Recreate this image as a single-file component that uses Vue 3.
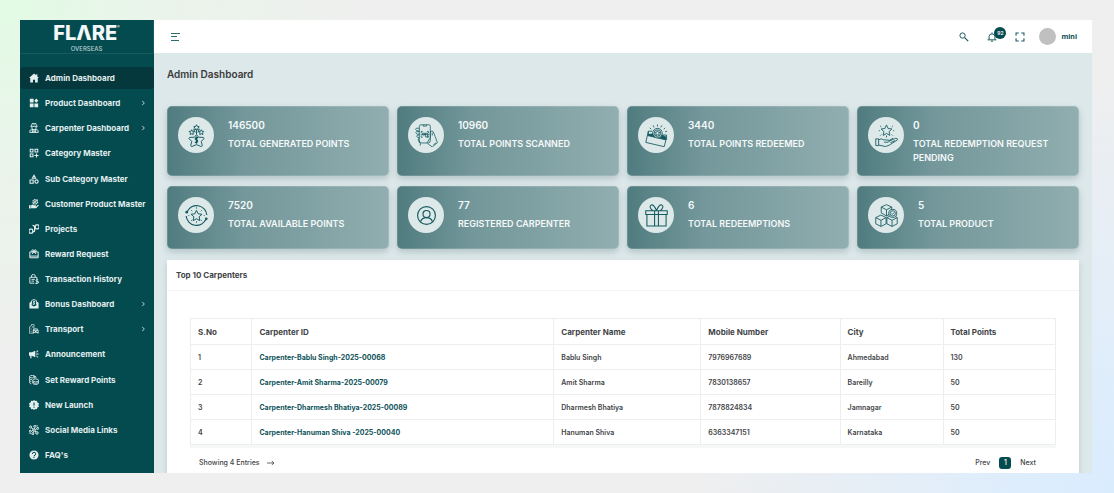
<script setup>
const menu = [
  { label: 'Admin Dashboard', icon: 'home', active: true },
  { label: 'Product Dashboard', icon: 'widgets', more: true },
  { label: 'Carpenter Dashboard', icon: 'worker', more: true },
  { label: 'Category Master', icon: 'category' },
  { label: 'Sub Category Master', icon: 'shapes' },
  { label: 'Customer Product Master', icon: 'handgear' },
  { label: 'Projects', icon: 'projects' },
  { label: 'Reward Request', icon: 'reward' },
  { label: 'Transaction History', icon: 'history' },
  { label: 'Bonus Dashboard', icon: 'bonus', more: true },
  { label: 'Transport', icon: 'transport', more: true },
  { label: 'Announcement', icon: 'megaphone' },
  { label: 'Set Reward Points', icon: 'coins' },
  { label: 'New Launch', icon: 'launch' },
  { label: 'Social Media Links', icon: 'social' },
  { label: "FAQ's", icon: 'faq' }
]

const stats = [
  { value: '146500', label: 'TOTAL GENERATED POINTS', icon: 'generated' },
  { value: '10960', label: 'TOTAL POINTS SCANNED', icon: 'scan' },
  { value: '3440', label: 'TOTAL POINTS REDEEMED', icon: 'redeemed' },
  { value: '0', label: 'TOTAL REDEMPTION REQUEST PENDING', icon: 'pending', tight: true },
  { value: '7520', label: 'TOTAL AVAILABLE POINTS', icon: 'available' },
  { value: '77', label: 'REGISTERED CARPENTER', icon: 'user' },
  { value: '6', label: 'TOTAL REDEEMPTIONS', icon: 'gift' },
  { value: '5', label: 'TOTAL PRODUCT', icon: 'boxes' }
]

const columns = ['S.No', 'Carpenter ID', 'Carpenter Name', 'Mobile Number', 'City', 'Total Points']

const carpenters = [
  { id: 'Carpenter-Bablu Singh-2025-00068', name: 'Bablu Singh', mobile: '7976967689', city: 'Ahmedabad', points: 130 },
  { id: 'Carpenter-Amit Sharma-2025-00079', name: 'Amit Sharma', mobile: '7830138657', city: 'Bareilly', points: 50 },
  { id: 'Carpenter-Dharmesh Bhatiya-2025-00089', name: 'Dharmesh Bhatiya', mobile: '7878824834', city: 'Jamnagar', points: 50 },
  { id: 'Carpenter-Hanuman Shiva -2025-00040', name: 'Hanuman Shiva', mobile: '6363347151', city: 'Karnataka', points: 50 }
]
</script>

<template>
  <div class="page">
    <svg class="sprite" aria-hidden="true">
      <!-- sidebar icons -->
      <symbol id="home" viewBox="0 0 24 24"><path fill="currentColor" d="M12 1 0 12h3v10.500h6.500V16h5v6.500H21V12h3l-4-3.700V3h-3v2.600z" /></symbol>
      <symbol id="widgets" viewBox="0 0 24 24"><path fill="currentColor" d="M2 2h9v9H2zM2 13h9v9H2zM13 13h9v9h-9zM17.500 1l5 5.500-5 5-5-5z" /></symbol>
      <symbol id="worker" viewBox="0 0 24 24"><g fill="none" stroke="currentColor" stroke-width="2.200"><path d="M6 8V6a6 6 0 0 1 12 0v2M3 8h18M7 9v3a5 5 0 0 0 10 0V9M2 23v-4q0-3 5-3h10q5 0 5 3v4zM8 16v7M16 16v7M8 20h8M12 0v5" /></g></symbol>
      <symbol id="category" viewBox="0 0 24 24"><path fill="none" stroke="currentColor" stroke-width="2.600" d="M3 3h6.500v6.500H3zM14.500 3H21v6.500h-6.500zM3 14.500h6.500V21H3zM18 13v10M13 18h10" /></symbol>
      <symbol id="shapes" viewBox="0 0 24 24"><g fill="none" stroke="currentColor" stroke-width="2.600"><path d="m12 3 4 7H8zM2.500 14.500H10V22H2.500z" /><circle cx="18" cy="18" r="4" /></g></symbol>
      <symbol id="handgear" viewBox="0 0 24 24"><path fill="currentColor" d="M0 15h4v8H0zM5 15q4-3 7 0h4q2 1 0 3h-5 6l5-4q2 0 1 2l-6 6H5z" /><g fill="none" stroke="currentColor" stroke-width="2"><circle cx="15" cy="7" r="5.500" stroke-dasharray="2.400 1" stroke-width="3" /><circle cx="15" cy="7" r="2" /><path d="m8 13 12-12" /></g></symbol>
      <symbol id="projects" viewBox="0 0 24 24"><g fill="none" stroke="currentColor" stroke-width="3"><rect x="0" y="12.500" width="9" height="9.500" rx="3" /><rect x="15" y="2" width="9" height="9.500" rx="3" /><path d="M9 18.500q4.500.5 4.500-3.500V8q0-4.500-5-4.500" /></g></symbol>
      <symbol id="reward" viewBox="0 0 24 24"><g fill="none" stroke="currentColor" stroke-width="2.400"><path d="M2 7h20v14H2zM2 17h20M12 7 7 12M12 7l5 5" /><circle cx="9" cy="4.500" r="2.500" /><circle cx="15" cy="4.500" r="2.500" /></g></symbol>
      <symbol id="history" viewBox="0 0 24 24"><g fill="none" stroke="currentColor" stroke-width="2.200"><path d="M13 22H2V8h17v4M6 8V5q0-4 4.500-4T15 5v3M6 13h8M6 17h6" /><path d="M22 14q-5-1.500-5 1.500t5 3-1 3.500-5-.5M19 12v12" /></g></symbol>
      <symbol id="bonus" viewBox="0 0 24 24"><path fill="currentColor" d="M1 9 6 6v9l6 3 6-3V6l5 3v14H1z" /><path fill="none" stroke="currentColor" stroke-width="2" d="M6 13V4l6-3 6 3v9M14.500 6H11q-2 2 1 3t0 3.500H9M12 4v10" /></symbol>
      <symbol id="transport" viewBox="0 0 24 24"><path fill="none" stroke="currentColor" stroke-width="1.600" d="M1 22V7l5-3V1h6v10M5 9v2M5 13v2M5 17v2M9 5v4M1 22h8" /><path fill="currentColor" fill-rule="evenodd" d="m9 15 2-4h9l3 4v8h-3v-2h-8v2H9zM12 13l-1 2h10l-1-2zM11 17v2h3v-2zM18 17v2h3v-2z" /></symbol>
      <symbol id="megaphone" viewBox="0 0 24 24"><path fill="currentColor" d="M0 8h7l8-4v16l-8-4H6v6H3v-6H0zM17 11h6v2h-6zM17 7l4-4 1.500 1.500-4 4zM17 17l4 4 1.500-1.500-4-4z" /></symbol>
      <symbol id="coins" viewBox="0 0 24 24"><g fill="none" stroke="currentColor" stroke-width="2"><ellipse cx="8" cy="4" rx="6.500" ry="3" /><path d="M1.500 4v15q1 2 4 2M14.500 4v5M1.500 9q2 3 6 2M1.500 14q2 2 4 2M10 3q5-1 8 3" /><ellipse cx="16" cy="13" rx="7" ry="3.500" /><path d="M9 13v7q3 3 7 3t7-3v-7M9 17q3 3 7 3t7-3" /></g></symbol>
      <symbol id="launch" viewBox="0 0 24 24"><path fill="currentColor" fill-rule="evenodd" d="m12 0 3 2.500L19 2l1 4 4 2-1.500 4L24 16l-4 2-1 4-4-.5-3 2.500-3-2.500L5 22l-1-4-4-2 1.500-4L0 8l4-2 1-4 4 .5zM10.700 6v8h2.600V6zM10.700 16v2.600h2.600V16z" /></symbol>
      <symbol id="social" viewBox="0 0 24 24"><g fill="none" stroke="currentColor" stroke-width="2.400"><circle cx="12" cy="12" r="3" /><circle cx="4" cy="5" r="2.600" /><circle cx="14" cy="3" r="2.500" /><circle cx="21" cy="8" r="2.400" /><circle cx="3" cy="15" r="2.400" /><circle cx="9" cy="21" r="2.400" /><circle cx="19" cy="19" r="3" /><path d="m6 7 4 3M14 6l-1 3M19 9l-4 2M6 15l3-2M10 19l1-4M17 17l-3-3M1 20h3M18 2h3" /></g></symbol>
      <symbol id="faq" viewBox="0 0 24 24"><circle cx="12" cy="12" r="11" fill="currentColor" /><path fill="none" stroke="#044b50" stroke-width="2.400" d="M8 9.500q0-4 4-4t4 3.500-4 5v1.500M12 17v2.500" /></symbol>

      <!-- stat icons -->
      <symbol id="generated" viewBox="0 0 24 24"><g fill="none" stroke="currentColor" stroke-width="1" stroke-linejoin="round"><path d="M9.800 13.800 12 11l2.200 2.800 5 .2q1.200.5.400 1.500l-2.600 2.600 1 4.400q-.2 1.300-1.500.9L12 21.500l-4.500 1.900q-1.300.4-1.500-.9l1-4.400-2.600-2.600q-.8-1 .4-1.500z" /><path stroke-width="1.400" d="M13.700 14.300h-2.300q-1.400 1.600.6 2.300t.4 2.600h-2.200M12 13v7.500" /><path d="m12 .8.900 1.800 2 .3-1.400 1.400.3 2-1.800-.9-1.800.9.300-2-1.400-1.400 2-.3zM7 6l.8 1.600 1.800.2-1.200 1.300.2 1.900L7 10.200 5.400 11l.2-1.900-1.300-1.300 1.900-.2zM17 6l.8 1.600 1.800.2-1.200 1.300.2 1.900-1.600-.8-1.600.8.200-1.900-1.300-1.300 1.900-.2zM12 6v5M9 5l1.500 4M15 5l-1.500 4" /></g></symbol>
      <symbol id="scan" viewBox="0 0 24 24"><g fill="none" stroke="currentColor" stroke-width=".8" stroke-linejoin="round"><path d="M4.500 19V2.500Q4.500.8 6 .8h8.500q1.500 0 1.500 1.700v14.300q0 3-2 3H7q-2.500 0-2.500-2M8.500 1v1.200h3.500V1M4.500 4.500Q.5 3.700.6 5.500t3.900 1.800M4.500 8Q.6 7.300.8 9t3.700 1.800M4.500 11.500q-3-.2-2.700 1.300t2.700 1.500M4.500 15q-2 .3-1 2t2 3.500v2M16 8q2-1.500 3 0l2 5 2.400 6.500-5.500 4.500-4.500-3.500M16 8v6l-3.500 6M18 9v3M19 22l3-2.500" /><path d="M6.500 9.500V7.700H8M12.500 7.700H14v1.800M14 12v1.800h-1.500M8 13.800H6.500V12M8 9.500h2v2H8zM11 9.500h2v4h-2zM6 10.800h9" /></g></symbol>
      <symbol id="redeemed" viewBox="0 0 24 24"><g fill="none" stroke="currentColor" stroke-width=".9"><path d="m2.500 12 19.300 4.500-1.700 7.200L.8 19.200zM2.500 12 3.500 7.500h4M17 11.500h5.500v5M3.500 7.500v3.500M18 12l3.500 1.300" /><circle cx="13" cy="9.500" r="5" fill="#dde8e9" /><circle cx="13" cy="9.500" r="3.500" /><path d="m13 7 .9 1.600 1.800.3-1.300 1.300.3 1.800-1.700-.8-1.700.8.300-1.800-1.200-1.300 1.700-.3zM13 .5v2M8.500 1.500l1 2M17.500 1.500l-1 2M5 4l1.500 1.500M21 4l-1.500 1.500M23 7.500l-2 .6" /></g><path fill="currentColor" d="m3 10.500 5.300-.5q.6 3 3 4L2.500 12zM17.700 11.500l4.500 2v3.300L13 14.600q4-.1 4.700-3.100z" /></symbol>
      <symbol id="pending" viewBox="0 0 24 24"><g fill="none" stroke="currentColor" stroke-width=".9" stroke-linejoin="round"><path d="m12 1 1.700 3.700 4 .5-3 2.700.8 4-3.500-2-3.500 2 .8-4-3-2.700 4-.5zM.8 15.500h3v7h-3zM3.800 16.500q3-2 5 0l5.500.3q1.200 1.200-.5 2.200H9.500M14.500 18l6.800-3q2.500-.3 2.200 1.500L15 22l-4 1.500-7.200-1.500M15 17l4-2.200M16 19.500l5-2.200" /><path d="M6.500 3 5.300 2M17.500 3l1.200-1M5 7H4M20 7h-1M6.500 11l-1 1M17.500 11l1 1M12 12v2" /></g></symbol>
      <symbol id="available" viewBox="0 0 24 24"><g fill="none" stroke="currentColor" stroke-width="1" stroke-linejoin="round"><path d="m12 6.500 1.700 3.700 4 .5-3 2.700.8 4-3.500-2-3.500 2 .8-4-3-2.700 4-.5z" /><path stroke-width="1.200" d="M2.200 8A10.800 10.800 0 0 1 22.800 11.500M21.800 16A10.800 10.800 0 0 1 1.200 12.500" /><path stroke-width=".9" d="M12 3.500v1.300M12 18v1.500M6.500 6.500l1 1M17.500 6.500l-1 1M4.500 12H3.500M20.500 12h-1M6.500 17.500l1-1M17.500 17.500l-1-1" /></g><circle cx="1.800" cy="8.500" r="1.400" fill="currentColor" /><circle cx="22.200" cy="15.500" r="1.400" fill="currentColor" /></symbol>
      <symbol id="user" viewBox="0 0 24 24"><g fill="none" stroke="currentColor" stroke-width="1.200"><circle cx="12" cy="12" r="9.300" /><circle cx="12" cy="10.500" r="3.700" /><path d="M5.800 18.500q1.200-4.300 6.200-4.300t6.200 4.300" /></g></symbol>
      <symbol id="gift" viewBox="0 0 24 24"><g fill="none" stroke="currentColor" stroke-width="1.100"><path d="M.8 7h22.400v4H.8zM2 11v12h20V11M10 7v16M14 7v16M12 6.700Q9 .2 6.700 1T6 4.800L8 7M12 6.700Q15 .2 17.300 1T18 4.800L16 7" /></g></symbol>
      <symbol id="boxes" viewBox="0 0 24 24"><g fill="none" stroke="currentColor" stroke-width=".9" stroke-linejoin="round"><path d="m12 .7 5.500 2.500v6L12 12.500 6.500 9.200v-6zM6.500 3.200 12 6l5.500-2.800M12 6v6.500M6.200 11.500l5.400 2.700v6.500l-5.400 2.700-5.400-2.700v-6.500zM.8 14.200 6.200 17l5.400-2.800M6.200 17v6.400M17.800 11.500l5.400 2.700v6.500l-5.400 2.700-5.400-2.700v-6.500zM12.400 14.200l5.400 2.800 5.400-2.800M17.800 17v6.400" /><circle cx="18.500" cy="9.800" r="4.200" fill="#dde8e9" /><circle cx="18.500" cy="9.800" r="2.800" /><path d="m17.200 9.800 1 1 1.800-2" /></g></symbol>

      <!-- header icons -->
      <symbol id="search" viewBox="0 0 24 24"><g fill="none" stroke="currentColor" stroke-width="2.400"><circle cx="8.500" cy="8.500" r="6.300" /><path d="m13.500 13.500 8.500 8.500" stroke-width="3" /></g></symbol>
      <symbol id="bell" viewBox="0 0 24 24"><path fill="none" stroke="currentColor" stroke-width="2.400" d="M1.500 18.800h21M5 18.500V11q0-6.500 7-6.500t7 6.500v7.500M12 1v3M9.500 22h5" /></symbol>
      <symbol id="expand" viewBox="0 0 24 24"><path fill="none" stroke="currentColor" stroke-width="2.600" d="M2.500 9V2.500H9M15 2.500h6.500V9M21.500 15v6.500H15M9 21.500H2.500V15" /></symbol>
    </svg>

    <div class="window">
      <aside class="sidebar">
        <div class="brand">
          <div class="brand-name">FLΛRE<sup>®</sup></div>
          <div class="brand-sub">OVERSEAS</div>
        </div>
        <nav class="menu">
          <a v-for="item in menu" :key="item.label" href="#" class="menu-item" :class="{ active: item.active }">
            <svg class="menu-icon" aria-hidden="true"><use :href="'#' + item.icon" /></svg>
            <span class="menu-label">{{ item.label }}</span>
            <svg v-if="item.more" class="chevron" viewBox="0 0 6 6" aria-hidden="true"><path d="m1.500.5 2.500 2.500-2.500 2.500" /></svg>
          </a>
        </nav>
      </aside>

      <div class="content">
        <header class="topbar">
          <button class="icon-button" type="button" aria-label="Toggle menu">
            <svg class="burger" viewBox="0 0 10 10" aria-hidden="true"><path d="M1 1.500h9M1 4.500h6M1 8.500h8" /></svg>
          </button>
          <div class="tools">
            <button class="icon-button" type="button" aria-label="Search"><svg class="tool-icon"><use href="#search" /></svg></button>
            <button class="icon-button bell" type="button" aria-label="Notifications">
              <svg class="tool-icon"><use href="#bell" /></svg>
              <span class="badge">92</span>
            </button>
            <button class="icon-button" type="button" aria-label="Full screen"><svg class="tool-icon"><use href="#expand" /></svg></button>
            <a class="profile" href="#"><span class="avatar"></span><span>mini</span></a>
          </div>
        </header>

        <main class="main">
          <h1 class="title">Admin Dashboard</h1>

          <section class="stats">
            <article v-for="stat in stats" :key="stat.label" class="stat" :class="{ tight: stat.tight }">
              <div class="stat-icon"><svg aria-hidden="true"><use :href="'#' + stat.icon" /></svg></div>
              <div class="stat-text">
                <div class="stat-value">{{ stat.value }}</div>
                <div class="stat-label">{{ stat.label }}</div>
              </div>
            </article>
          </section>

          <section class="panel">
            <h2 class="panel-title">Top 10 Carpenters</h2>
            <div class="panel-body">
              <table class="table">
                <colgroup>
                  <col class="c-no" /><col class="c-id" /><col class="c-name" /><col class="c-mobile" /><col class="c-city" /><col />
                </colgroup>
                <thead>
                  <tr><th v-for="column in columns" :key="column" scope="col">{{ column }}</th></tr>
                </thead>
                <tbody>
                  <tr v-for="(row, index) in carpenters" :key="row.id">
                    <td>{{ index + 1 }}</td>
                    <td><a href="#">{{ row.id }}</a></td>
                    <td>{{ row.name }}</td>
                    <td>{{ row.mobile }}</td>
                    <td>{{ row.city }}</td>
                    <td>{{ row.points }}</td>
                  </tr>
                </tbody>
              </table>
              <div class="table-end"></div>
              <footer class="table-footer">
                <div class="entries">
                  <span>Showing 4 Entries</span>
                  <svg class="arrow" viewBox="0 0 8 6" aria-hidden="true"><path d="M0 3h7M4.800 1l2.200 2-2.200 2" /></svg>
                </div>
                <div class="pager">
                  <button type="button">Prev</button>
                  <button type="button" class="current">1</button>
                  <button type="button">Next</button>
                </div>
              </footer>
            </div>
          </section>
        </main>
      </div>
    </div>
  </div>
</template>

<style>
body {
  background: #efefef;
}
</style>

<style scoped>
.page {
  box-sizing: border-box;
  height: 100vh;
  padding: 20px 22px 20px 20px;
  background:
    radial-gradient(circle at 0 0, #e2fbe4 0, rgba(232, 246, 233, 0.700) 160px, rgba(239, 239, 239, 0) 380px),
    radial-gradient(circle at 100% 100%, #d9ecff 0, #dfedfb 120px, rgba(239, 239, 239, 0) 420px),
    #efefef;
  font-family: Inter, "Liberation Sans", sans-serif;
  color: #3f4447;
}

.sprite {
  position: absolute;
  width: 0;
  height: 0;
}

.window {
  display: flex;
  height: 100%;
  overflow: hidden;
}

.sidebar {
  display: flex;
  flex-direction: column;
  flex: 0 0 134px;
  background: #044b50;
  color: #e3eeee;
}

.brand {
  box-sizing: border-box;
  height: 34px;
  padding-top: 1px;
  border-bottom: 1px solid #16595e;
  border-right: 1px solid #16595e;
  text-align: center;
}

.brand-name {
  font-size: 20px;
  line-height: 24px;
  font-weight: 800;
  color: #f4f8f8;
}

.brand-name sup {
  font-size: 4px;
  line-height: 4px;
  vertical-align: 12px;
}

.brand-sub {
  font-size: 6px;
  line-height: 7px;
  font-weight: 500;
  color: #b9cfd0;
}

.menu {
  display: flex;
  flex: 1;
  flex-direction: column;
  justify-content: space-between;
  padding: 13px 0 7px;
}

.menu-item {
  display: flex;
  align-items: center;
  gap: 6px;
  height: 22px;
  padding: 0 8px 0 9px;
  border-radius: 4px;
  color: inherit;
  font-size: 8px;
  font-weight: 700;
  text-decoration: none;
  white-space: nowrap;
}

.menu-item.active {
  background: #04383d;
}

.menu-icon {
  flex: none;
  width: 10px;
  height: 10px;
}

.menu-label {
  flex: 1;
}

.chevron {
  width: 5px;
  height: 6px;
  fill: none;
  stroke: currentColor;
}

.content {
  display: flex;
  flex: 1;
  flex-direction: column;
  min-width: 0;
  background: #dde8ea;
}

.topbar {
  display: flex;
  flex: none;
  align-items: center;
  justify-content: space-between;
  height: 33px;
  padding: 0 15px 0 16px;
  background: #fff;
}

.icon-button {
  display: block;
  padding: 0;
  border: 0;
  background: none;
  color: #1b5b62;
  font-family: inherit;
}

.burger,
.tool-icon {
  display: block;
  width: 10px;
  height: 10px;
}

.burger {
  fill: none;
  stroke: #2e696e;
}

.tools {
  display: flex;
  align-items: center;
  gap: 18px;
}

.bell {
  position: relative;
}

.badge {
  position: absolute;
  left: 7px;
  top: -5px;
  width: 12px;
  height: 12px;
  border-radius: 50%;
  background: #044b50;
  color: #fff;
  font-size: 5px;
  line-height: 12px;
  font-weight: 600;
  text-align: center;
}

.profile {
  display: flex;
  align-items: center;
  gap: 5px;
  margin-left: -4px;
  color: #0b4f56;
  font-family: "Noto Sans", "Open Sans", sans-serif;
  font-size: 7px;
  font-weight: 700;
  text-decoration: none;
}

.avatar {
  width: 17px;
  height: 17px;
  border-radius: 50%;
  background: #c0c0c0;
}

.main {
  padding: 14px 13px 0;
}

.title {
  margin: 0 0 25px;
  font-size: 10px;
  line-height: 14px;
  font-weight: 600;
  color: #3a3a3a;
}

.stats {
  display: grid;
  grid-template-columns: repeat(4, minmax(0, 1fr));
  gap: 10px 8px;
}

.stat {
  display: flex;
  align-items: flex-start;
  gap: 14px;
  padding: 11px 12px 11px 11px;
  border-radius: 5px;
  background: linear-gradient(90deg, #507c7f, #73979a 34%, #91aeb0);
  box-shadow:
    inset 0 0 0 1px rgba(255, 255, 255, 0.150),
    0 3px 6px rgba(60, 90, 95, 0.250);
  color: #f5f9f9;
}

.stat.tight {
  gap: 9px;
}

.stat-icon {
  display: grid;
  place-items: center;
  flex: none;
  width: 36px;
  height: 36px;
  border-radius: 50%;
  background: #dde8e9;
  color: #145a60;
}

.stat-icon svg {
  width: 23px;
  height: 23px;
}

.stat-text {
  min-height: 41px;
  font-weight: 600;
}

.stat-value {
  margin-bottom: 4px;
  font-size: 10px;
  line-height: 16px;
}

.stat-label {
  font-size: 9px;
  line-height: 14px;
}

.panel {
  margin-top: 11px;
  background: #fff;
  box-shadow: 0 3px 6px rgba(60, 90, 95, 0.200);
}

.panel-title {
  margin: 0;
  padding: 0 9px;
  border-bottom: 1px solid #f3f5f5;
  font-size: 8px;
  line-height: 30px;
  font-weight: 700;
}

.panel-body {
  padding: 27px 23px 12px;
}

.table {
  width: 100%;
  table-layout: fixed;
  border-collapse: collapse;
  text-align: left;
}

.c-no { width: 7.100%; }
.c-id { width: 34.900%; }
.c-name { width: 17%; }
.c-mobile { width: 16.100%; }
.c-city { width: 11.900%; }

.table th,
.table td {
  box-sizing: border-box;
  height: 25px;
  padding: 0 7px;
  border: 1px solid #eceff0;
  font-size: 7px;
  font-weight: 600;
}

.table th {
  height: 26px;
  font-size: 8px;
  font-weight: 700;
}

.table a {
  color: #0e535a;
  font-weight: 700;
  text-decoration: none;
}

.table-end {
  height: 3px;
  background: #f6f8f8;
}

.table-footer {
  display: flex;
  align-items: center;
  justify-content: space-between;
  padding: 9px 20px 0 9px;
  font-size: 7px;
  line-height: 12px;
  font-weight: 500;
}

.entries,
.pager {
  display: flex;
  align-items: center;
}

.entries {
  gap: 7px;
}

.arrow {
  width: 8px;
  height: 6px;
  fill: none;
  stroke: currentColor;
  stroke-width: 0.800;
}

.pager {
  gap: 9px;
}

.pager button {
  padding: 0;
  border: 0;
  background: none;
  color: inherit;
  font: inherit;
}

.pager .current {
  width: 12px;
  height: 12px;
  border-radius: 3px;
  background: #044b50;
  color: #fff;
}
</style>
